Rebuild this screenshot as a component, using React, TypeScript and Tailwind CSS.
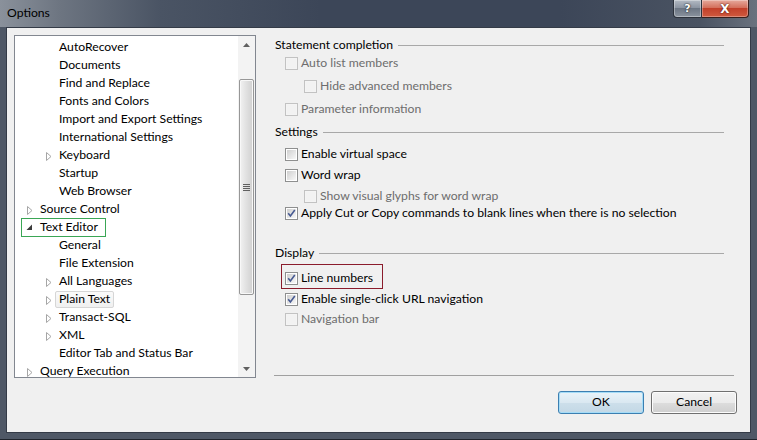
import React from "react";

type Item = { t: string; l: 1 | 2; a?: "c" | "e"; green?: boolean; hover?: boolean };

const items: Item[] = [
  { t: "AutoRecover", l: 2 },
  { t: "Documents", l: 2 },
  { t: "Find and Replace", l: 2 },
  { t: "Fonts and Colors", l: 2 },
  { t: "Import and Export Settings", l: 2 },
  { t: "International Settings", l: 2 },
  { t: "Keyboard", l: 2, a: "c" },
  { t: "Startup", l: 2 },
  { t: "Web Browser", l: 2 },
  { t: "Source Control", l: 1, a: "c" },
  { t: "Text Editor", l: 1, a: "e", green: true },
  { t: "General", l: 2 },
  { t: "File Extension", l: 2 },
  { t: "All Languages", l: 2, a: "c" },
  { t: "Plain Text", l: 2, a: "c", hover: true },
  { t: "Transact-SQL", l: 2, a: "c" },
  { t: "XML", l: 2, a: "c" },
  { t: "Editor Tab and Status Bar", l: 2 },
  { t: "Query Execution", l: 1, a: "c" },
];

function Arrow({ a }: { a?: "c" | "e" }) {
  if (a === "c")
    return (
      <svg width="6" height="9" viewBox="0 0 6 9" className="mt-[2px]">
        <polygon points="0.5,0.5 5,4.5 0.5,8.5" fill="white" stroke="#a6a6a6" strokeWidth="1" />
      </svg>
    );
  if (a === "e")
    return (
      <svg width="7" height="7" viewBox="0 0 7 7" className="mt-[1px] ml-[-1px]">
        <polygon points="6,0.5 6,6 0.5,6" fill="#3c3c3c" />
      </svg>
    );
  return null;
}

function TreeRow({ it }: { it: Item }) {
  return (
    <div className={`relative flex h-[18px] shrink-0 items-center ${it.l === 2 ? "pl-[31px]" : "pl-[12px]"}`}>
      <span className="flex w-[13px] items-center">
        <Arrow a={it.a} />
      </span>
      {it.hover ? (
        <span className="ml-[-4px] flex h-[17px] items-center rounded-[2px] border border-[#d6d6d6] bg-[linear-gradient(#fafafa,#f0f0f0)] pl-[3px] pr-[3px] whitespace-nowrap">
          {it.t}
        </span>
      ) : (
        <span className="whitespace-nowrap">{it.t}</span>
      )}
      {it.green && (
        <span className="absolute left-[6px] top-0 h-[19px] w-[85px] border border-[#3aa655]" />
      )}
    </div>
  );
}

function Check({ checked, disabled }: { checked?: boolean; disabled?: boolean }) {
  return (
    <span
      className={`relative block h-[13px] w-[13px] shrink-0 border p-[1px] ${
        disabled ? "border-[#c2c2c2] bg-[#f4f4f4]" : "border-[#8e8f8f] bg-white"
      }`}
    >
      <span
        className={`block h-full w-full ${
          disabled ? "bg-[#f2f2f2]" : "bg-[linear-gradient(135deg,#cfcfcf,#f8f8f8)]"
        }`}
      />
      {checked && (
        <svg width="13" height="13" viewBox="0 0 13 13" className="absolute left-[-1px] top-[-1px]">
          <path d="M3.2 6.3 L5.4 9 L9.8 3" fill="none" stroke="#475a92" strokeWidth="1.6" />
        </svg>
      )}
    </span>
  );
}

function CRow({
  label,
  level = 1,
  checked,
  disabled,
  mt,
  red,
}: {
  label: string;
  level?: 1 | 2;
  checked?: boolean;
  disabled?: boolean;
  mt: string;
  red?: boolean;
}) {
  return (
    <div className={`relative flex h-[15px] items-center gap-[3px] ${level === 2 ? "pl-[30px]" : "pl-[11px]"} ${mt}`}>
      <Check checked={checked} disabled={disabled} />
      <span className={`whitespace-nowrap ${disabled ? "text-[#6d6d6d]" : "text-black"}`}>{label}</span>
      {red && <span className="absolute left-[7px] top-[-7px] bottom-[-3px] w-[102px] border border-[#8b1c2c]" />}
    </div>
  );
}

function Header({ label, mt }: { label: string; mt: string }) {
  return (
    <div className={`flex h-[15px] items-center pl-[1px] pr-[10px] ${mt}`}>
      <span className="whitespace-nowrap">{label}</span>
      <span className="ml-[5px] h-px flex-1 bg-[#a8a8a8]" />
    </div>
  );
}

export default function App() {
  return (
    <div className="flex h-[440px] w-[757px] flex-col bg-[#4f5866] font-['Lato',sans-serif] text-[12.2px] text-black">
      {/* title bar */}
      <div className="flex h-[27px] shrink-0 items-start justify-between bg-[linear-gradient(90deg,#8a919b_0px,#6d7581_60px,#4a5464_160px,#3c4658_320px,#3c4658_560px,#4a5362_700px,#6a727e_757px)]">
        <span className="pl-[7px] pt-[5px] text-[12.2px] leading-[16px] text-black">Options</span>
        <div className="mr-[8px] flex h-[18px]">
          <div className="flex w-[29px] items-center justify-center rounded-bl-[4px] border border-t-0 border-[#2c323c] bg-[linear-gradient(#b3bac4,#8c95a2_45%,#6c7684_50%,#8a939f)] shadow-[inset_0_0_0_1px_rgba(255,255,255,0.35)]">
            <span className="font-['DejaVu_Sans',sans-serif] text-[11px] font-bold leading-none text-white [text-shadow:0_0_2px_#222,0_0_1px_#222]">?</span>
          </div>
          <div className="flex w-[47px] items-center justify-center rounded-br-[4px] border border-l-0 border-t-0 border-[#3a1f1b] bg-[linear-gradient(#e6a99c,#d4705c_45%,#c2402a_50%,#d05a3f)] shadow-[inset_0_0_0_1px_rgba(255,255,255,0.3)]">
            <span className="font-['DejaVu_Sans',sans-serif] text-[12px] font-bold leading-none text-white [text-shadow:0_0_2px_#5a1a10,0_0_1px_#5a1a10]">X</span>
          </div>
        </div>
      </div>

      {/* client */}
      <div className="mx-[6px] flex h-[406px] shrink-0 flex-col border border-[#343b47] bg-[#f0f0f0]">
        <div className="flex pt-[7px]">
          {/* tree */}
          <div className="ml-[7px] flex h-[343px] w-[242px] border border-[#828790] bg-white">
            <div className="flex flex-1 flex-col overflow-hidden pt-[2px]">
              {items.map((it) => (
                <TreeRow key={it.t} it={it} />
              ))}
            </div>
            {/* scrollbar */}
            <div className="flex w-[17px] flex-col bg-[#f3f3f3]">
              <div className="flex h-[17px] items-center justify-center">
                <svg width="7" height="4" viewBox="0 0 7 4">
                  <polygon points="0,4 3.5,0 7,4" fill="#606060" />
                </svg>
              </div>
              <div className="mx-[1px] mt-[26px] flex h-[216px] items-center justify-center rounded-[2px] border border-[#979797] bg-[linear-gradient(90deg,#f2f2f2,#e2e2e2_45%,#d0d0d0)] shadow-[inset_0_0_0_1px_#f8f8f8]">
                <div className="flex flex-col gap-[1px]">
                  <span className="block h-px w-[7px] bg-[#606060]" />
                  <span className="block h-px w-[7px] bg-[#606060]" />
                  <span className="block h-px w-[7px] bg-[#606060]" />
                  <span className="block h-px w-[7px] bg-[#606060]" />
                </div>
              </div>
              <div className="flex-1" />
              <div className="flex h-[17px] items-center justify-center">
                <svg width="7" height="4" viewBox="0 0 7 4">
                  <polygon points="0,0 3.5,4 7,0" fill="#606060" />
                </svg>
              </div>
            </div>
          </div>

          {/* right panel */}
          <div className="ml-[18px] flex h-[343px] w-[460px] flex-col">
            <Header label="Statement completion" mt="mt-[3px]" />
            <CRow label="Auto list members" disabled mt="mt-[3px]" />
            <CRow label="Hide advanced members" level={2} disabled mt="mt-[8px]" />
            <CRow label="Parameter information" disabled mt="mt-[8px]" />
            <Header label="Settings" mt="mt-[8px]" />
            <CRow label="Enable virtual space" mt="mt-[7px]" />
            <CRow label="Word wrap" mt="mt-[6px]" />
            <CRow label="Show visual glyphs for word wrap" level={2} disabled mt="mt-[6px]" />
            <CRow label="Apply Cut or Copy commands to blank lines when there is no selection" checked mt="mt-[2px]" />
            <Header label="Display" mt="mt-[25px]" />
            <CRow label="Line numbers" checked red mt="mt-[10px]" />
            <CRow label="Enable single-click URL navigation" checked mt="mt-[6px]" />
            <CRow label="Navigation bar" disabled mt="mt-[5px]" />
            <div className="flex-1" />
            <div className="mb-[2px] h-px bg-[#a0a0a0]" />
          </div>
        </div>

        {/* buttons */}
        <div className="mt-[13px] flex justify-end gap-[7px] pr-[13px]">
          <button className="flex h-[23px] w-[86px] items-center justify-center rounded-[3px] border border-[#3c7fb1] bg-[linear-gradient(#e9f3f9,#dae8f1_50%,#cddfea_50%,#c3d8e6)] shadow-[inset_0_0_0_1px_#a5dcf7] text-black">
            OK
          </button>
          <button className="flex h-[23px] w-[86px] items-center justify-center rounded-[3px] border border-[#707070] bg-[linear-gradient(#f2f2f2,#ebebeb_50%,#dddddd_50%,#cfcfcf)] shadow-[inset_0_0_0_1px_#fcfcfc] text-black">
            Cancel
          </button>
        </div>
      </div>
      <div className="flex-1 border-b border-[#1f242c]" />
    </div>
  );
}
